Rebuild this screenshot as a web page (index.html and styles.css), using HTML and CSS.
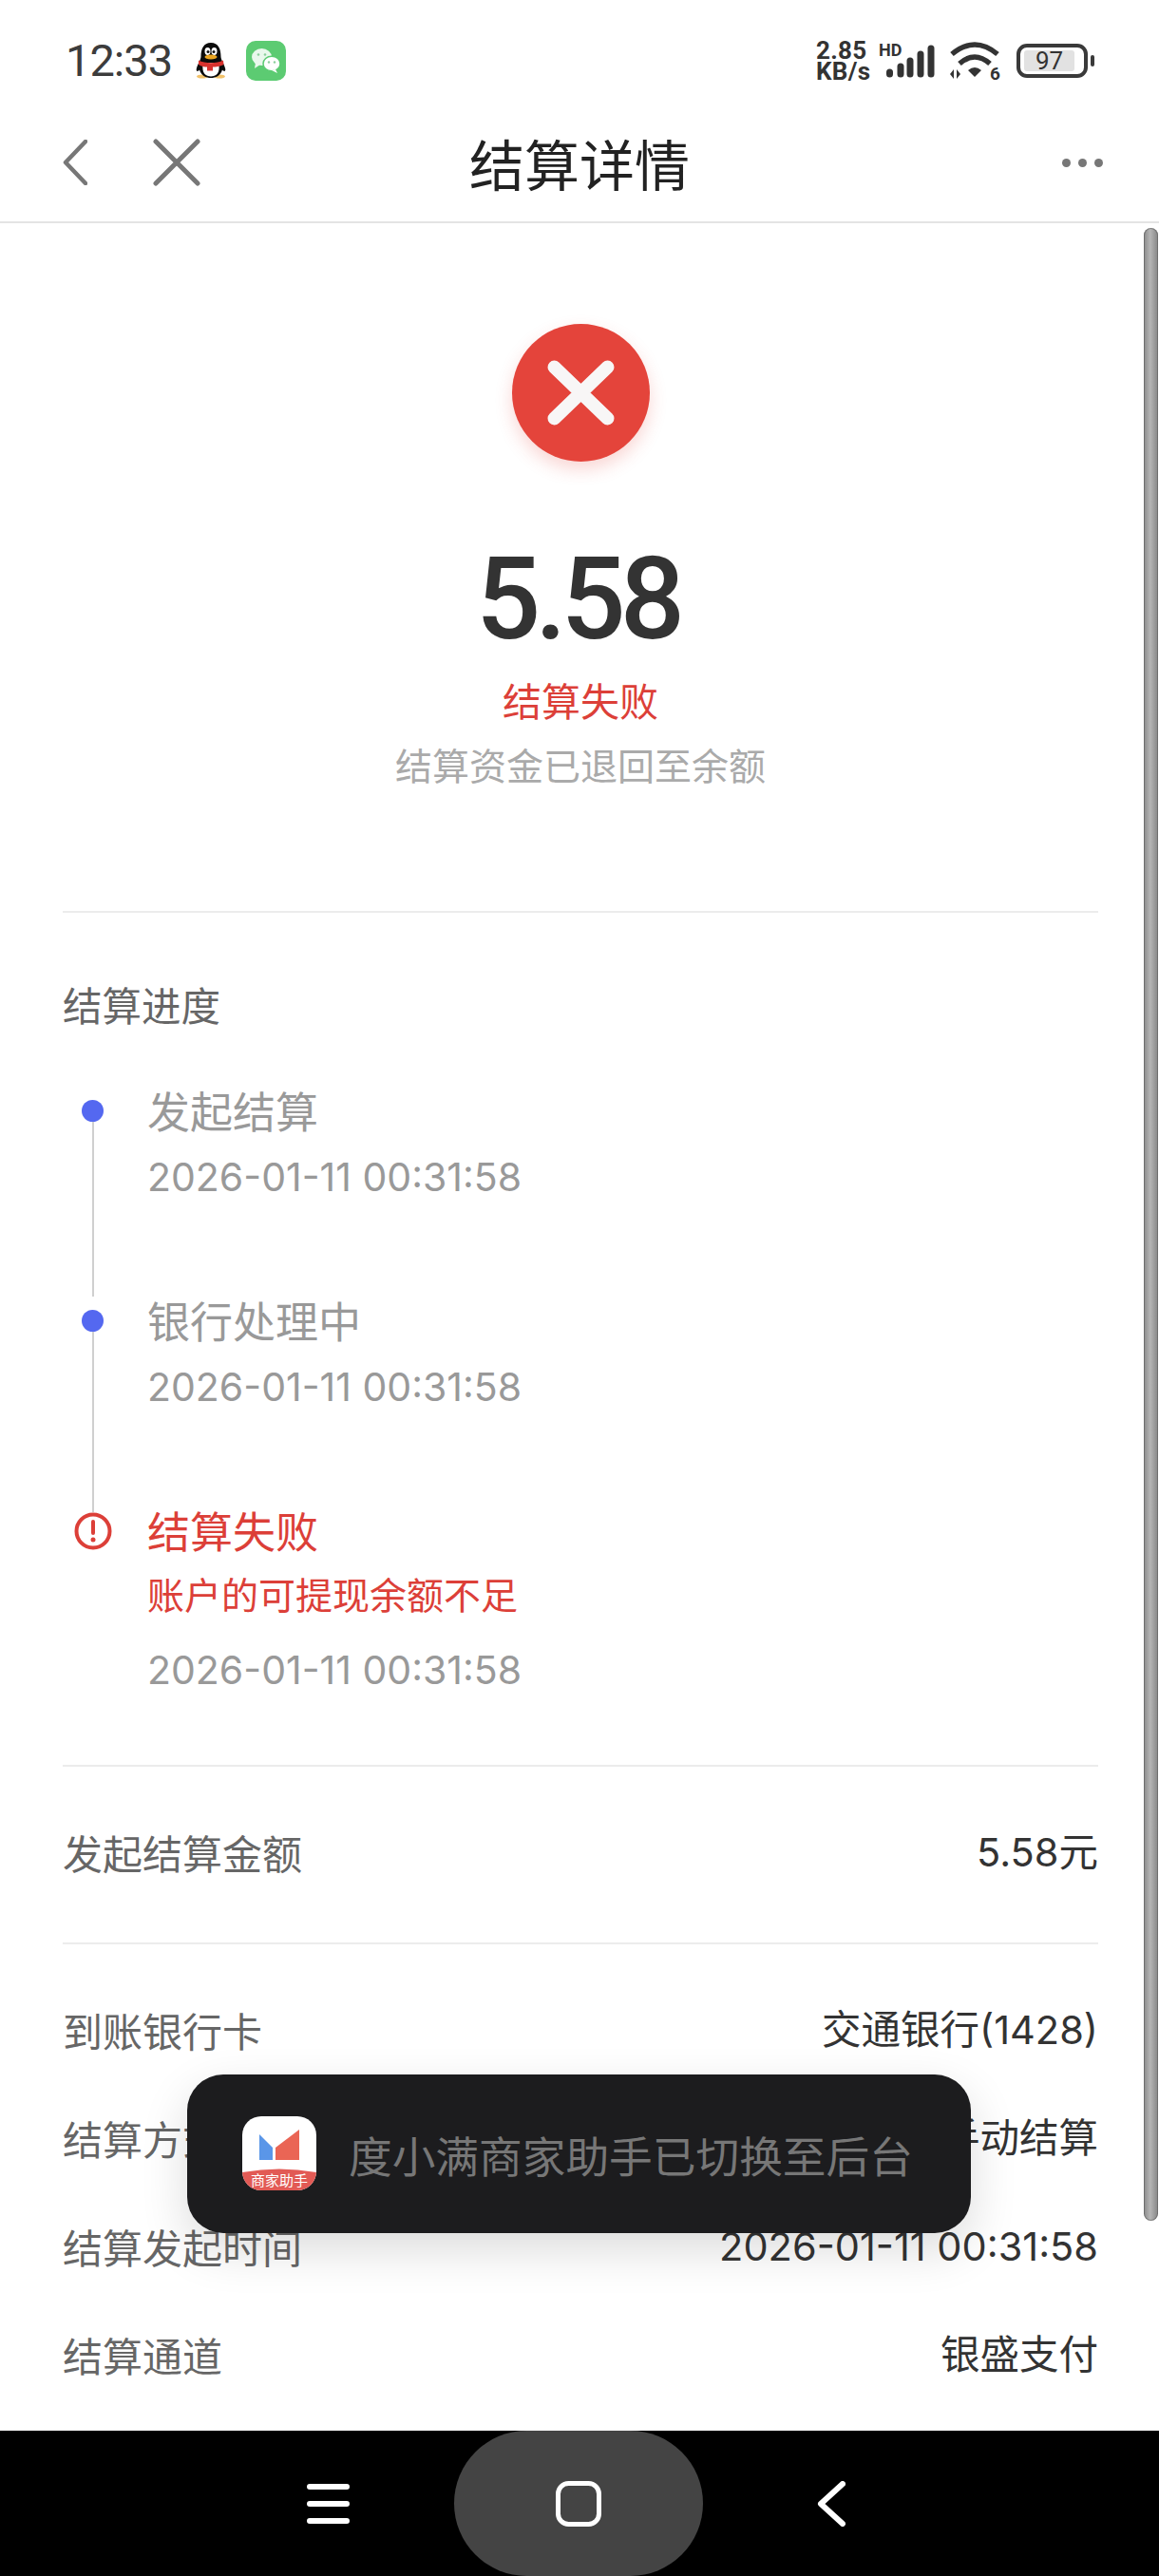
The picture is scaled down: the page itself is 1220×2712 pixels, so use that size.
FILE: index.html
```html
<!DOCTYPE html>
<html lang="zh-CN">
<head>
<meta charset="utf-8">
<title>结算详情</title>
<link rel="stylesheet" href="styles.css">
</head>
<body>
<div class="app">
  <header class="statusbar">
    <div class="status-left">
      <span class="clock">12:33</span>
      <svg class="qq" viewBox="0 0 32 38" width="32" height="38">
        <ellipse cx="7" cy="35.500" rx="6" ry="2" fill="#f2c26a"/><ellipse cx="25" cy="35.500" rx="6" ry="2" fill="#f2c26a"/>
        <path d="M16 0C8 0 5.500 7 5.500 14.500C5.500 18 2 22 .8 27.500C.3 30 2 31 4 28.500C6 35 11 37 16 37C21 37 26 35 28 28.500C30 31 31.700 30 31.200 27.500C30 22 26.500 18 26.500 14.500C26.500 7 24 0 16 0Z" fill="#0c0c0c"/>
        <path d="M8 21C6.500 27 7 35.500 16 35.500C25 35.500 25.500 27 24 21Z" fill="#fff"/>
        <ellipse cx="12.500" cy="9" rx="3" ry="4" fill="#fff"/><ellipse cx="19.500" cy="9" rx="3" ry="4" fill="#fff"/>
        <circle cx="13" cy="9.500" r="1.500" fill="#111"/><circle cx="19" cy="9.500" r="1.500" fill="#111"/>
        <ellipse cx="16" cy="15" rx="6.500" ry="2.500" fill="#eba622"/>
        <path d="M3 18.500C10 22 22 22 29 18.500L29.500 23C26 25 21 25.500 18 25.500L18 29.500L12 29.500L12 25.500C9 25.500 6 25 3 23Z" fill="#d8322e"/>
      </svg>
      <svg class="wechat" viewBox="0 0 42 42" width="42" height="42">
        <rect width="42" height="42" rx="10" fill="#5ccb72"/>
        <ellipse cx="16.500" cy="17" rx="10.500" ry="9" fill="#e9f8ec"/>
        <path d="M10 23L9 29L15 25Z" fill="#e9f8ec"/>
        <ellipse cx="27" cy="24" rx="9" ry="7.800" fill="#fff" stroke="#5ccb72" stroke-width="1.500"/>
        <path d="M31 30L33 34L27 31Z" fill="#fff"/>
        <circle cx="13" cy="14.500" r="1.300" fill="#8ccf9c"/><circle cx="20" cy="14.500" r="1.300" fill="#8ccf9c"/>
        <circle cx="24" cy="22.500" r="1.200" fill="#8ccf9c"/><circle cx="30" cy="22.500" r="1.200" fill="#8ccf9c"/>
      </svg>
    </div>
    <div class="status-right">
      <div class="speed"><span>2.85</span><span>KB/s</span></div>
      <div class="signal-wrap">
        <span class="hd">HD</span>
        <svg class="signal" viewBox="0 0 59 42" width="59" height="42">
          <g stroke="#333" stroke-width="7" stroke-linecap="round" fill="none">
            <path d="M11.500 33V35"/><path d="M23 27V35"/><path d="M33 21V35"/><path d="M44 14V35"/><path d="M55 8V35"/>
          </g>
        </svg>
      </div>
      <div class="wifi-wrap">
        <svg class="wifi" viewBox="0 0 54 42" width="54" height="42">
          <g stroke="#333" stroke-width="5.500" fill="none">
            <path d="M3 14Q27 -6 51 14"/>
            <path d="M11 24Q27 10 43 24"/>
          </g>
          <path d="M20 31Q27 25 34 31L27 38Z" fill="#333"/>
          <path d="M5 30V40L1 35ZM8 30V40L12 35Z" fill="#333"/>
        </svg>
        <span class="wifi-six">6</span>
      </div>
      <div class="battery">
        <div class="battery-body"><span class="battery-fill">97</span></div>
        <span class="battery-nub"></span>
      </div>
    </div>
  </header>

  <nav class="navbar">
    <div class="nav-left">
      <svg viewBox="0 0 26 48" width="26" height="48"><path d="M24 2L3 24L24 46" fill="none" stroke="#777" stroke-width="4.500" stroke-linecap="round" stroke-linejoin="round"/></svg>
      <svg viewBox="0 0 50 50" width="50" height="50"><path d="M3 3L47 47M47 3L3 47" fill="none" stroke="#777" stroke-width="5" stroke-linecap="round"/></svg>
    </div>
    <h1 class="nav-title">结算详情</h1>
    <div class="nav-more"><i></i><i></i><i></i></div>
  </nav>

  <main class="content">
    <section class="hero">
      <div class="fail-circle">
        <svg viewBox="0 0 145 145" width="145" height="145"><path d="M44.500 45.500L100.500 99.500M100.500 45.500L44.500 99.500" fill="none" stroke="#f8f6f6" stroke-width="14" stroke-linecap="round"/></svg>
      </div>
      <div class="amount">5.58</div>
      <div class="status-text">结算失败</div>
      <div class="status-sub">结算资金已退回至余额</div>
    </section>

    <section class="progress">
      <h2 class="progress-title">结算进度</h2>
      <div class="steps">
        <div class="step">
          <div class="marker"><span class="dot"></span><span class="line"></span></div>
          <div class="step-body step-body-gap">
            <div class="step-name">发起结算</div>
            <div class="step-time">2026-01-11 00:31:58</div>
          </div>
        </div>
        <div class="step">
          <div class="marker"><span class="dot"></span><span class="line"></span></div>
          <div class="step-body step-body-gap">
            <div class="step-name">银行处理中</div>
            <div class="step-time">2026-01-11 00:31:58</div>
          </div>
        </div>
        <div class="step">
          <div class="marker marker-error">
            <span class="line-stub"></span>
            <svg viewBox="0 0 40 40" width="40" height="40"><circle cx="20" cy="20" r="17.500" fill="none" stroke="#dc3f38" stroke-width="4"/><path d="M20 10V22" stroke="#dc3f38" stroke-width="4" stroke-linecap="round"/><circle cx="20" cy="29" r="2.500" fill="#dc3f38"/></svg>
          </div>
          <div class="step-body">
            <div class="step-name step-name-error">结算失败</div>
            <div class="step-error">账户的可提现余额不足</div>
            <div class="step-time step-time-after">2026-01-11 00:31:58</div>
          </div>
        </div>
      </div>
    </section>

    <section class="amount-row">
      <div class="row"><span class="row-label">发起结算金额</span><span class="row-value">5.58元</span></div>
    </section>

    <section class="details">
      <div class="row"><span class="row-label">到账银行卡</span><span class="row-value">交通银行(1428)</span></div>
      <div class="row"><span class="row-label">结算方式</span><span class="row-value">手动结算</span></div>
      <div class="row"><span class="row-label">结算发起时间</span><span class="row-value">2026-01-11 00:31:58</span></div>
      <div class="row"><span class="row-label">结算通道</span><span class="row-value">银盛支付</span></div>
    </section>

    <div class="scrollbar"></div>
    <div class="toast">
      <svg class="toast-icon" viewBox="0 0 78 78" width="78" height="78">
        <defs><clipPath id="iconclip"><rect width="78" height="78" rx="20"/></clipPath></defs>
        <g clip-path="url(#iconclip)">
          <rect width="78" height="78" fill="#fff"/>
          <path d="M18 19L32 33V46H18Z" fill="#5a96e8"/>
          <path d="M35 33L60 14V46H35Z" fill="#ea6555"/>
          <path d="M0 59Q39 52 78 59V78H0Z" fill="#e25a55"/>
          <text class="toast-icon-text" x="39" y="73" text-anchor="middle">商家助手</text>
        </g>
      </svg>
      <span class="toast-text">度小满商家助手已切换至后台</span>
    </div>
  </main>

  <footer class="sysnav">
    <svg viewBox="0 0 45 42" width="45" height="42"><path d="M3 3H42M3 21H42M3 39H42" stroke="#fff" stroke-width="6" stroke-linecap="round"/></svg>
    <div class="home-pill">
      <svg viewBox="0 0 48 48" width="48" height="48"><rect x="2.500" y="2.500" width="43" height="43" rx="11" fill="none" stroke="#fff" stroke-width="5"/></svg>
    </div>
    <svg viewBox="0 0 30 48" width="30" height="48"><path d="M27 3L4 24L27 45" fill="none" stroke="#fff" stroke-width="6" stroke-linecap="round" stroke-linejoin="round"/></svg>
  </footer>
</div>
</body>
</html>
```
FILE: styles.css
```css
* { box-sizing: border-box; }
html, body { margin: 0; padding: 0; background: #fff; }
body { font-family: "Noto Sans CJK SC", "Noto Sans", Roboto, sans-serif; color: #333; }
h1, h2 { margin: 0; font-weight: 400; }

.app { width: 1220px; height: 2712px; display: flex; flex-direction: column; overflow: hidden; background: #fff; }

/* status bar */
.statusbar { height: 124px; flex: none; display: flex; justify-content: space-between; align-items: flex-start; padding: 43px 68px 0 69px; }
.status-left { display: flex; align-items: center; height: 42px; }
.clock { font-family: Roboto, sans-serif; font-size: 47px; line-height: 42px; letter-spacing: -1px; color: #3c3c3c; width: 137px; }
.wechat { margin-left: 21px; }
.status-right { display: flex; align-items: center; height: 42px; }
.speed { display: flex; flex-direction: column; width: 58px; margin-right: 8px; font-family: Roboto, sans-serif; font-weight: 700; font-size: 26px; line-height: 22px; color: #333; letter-spacing: .3px; }
.signal-wrap { display: flex; width: 59px; height: 42px; margin-right: 15px; position: relative; }
.hd { position: absolute; left: 0; top: 0; font-family: Roboto, sans-serif; font-weight: 700; font-size: 18px; line-height: 20px; color: #333; }
.wifi-wrap { display: flex; width: 54px; height: 42px; margin-right: 17px; position: relative; }
.wifi-six { position: absolute; right: 0; bottom: 0; font-family: Roboto, sans-serif; font-weight: 700; font-size: 19px; line-height: 15px; color: #333; }
.battery { display: flex; align-items: center; gap: 3px; }
.battery-body { width: 75px; height: 36px; border: 4px solid #3a3a3a; border-radius: 11px; padding: 3px 10px 3px 4px; display: flex; }
.battery-fill { flex: 1; background: #e2e2e2; border-radius: 3px; font-family: Roboto, sans-serif; font-size: 26px; line-height: 22px; text-align: center; color: #333; }
.battery-nub { width: 4px; height: 12px; background: #3a3a3a; border-radius: 2px; }

/* nav */
.navbar { height: 111px; flex: none; display: grid; grid-template-columns: 1fr auto 1fr; align-items: center; padding: 0 59px 15px; border-bottom: 2px solid #e4e4e4; }
.nav-left { display: flex; align-items: center; gap: 69px; padding-left: 7px; }
.nav-title { font-size: 58px; line-height: 80px; color: #222; }
.nav-more { display: flex; justify-content: flex-end; gap: 8px; }
.nav-more i { width: 9px; height: 9px; border-radius: 50%; background: #777; }

/* content */
.content { flex: 1; position: relative; padding: 0 64px 0 66px; min-height: 0; }
.hero { display: flex; flex-direction: column; align-items: center; padding: 106px 0 130px; border-bottom: 2px solid #ececec; }
.fail-circle { width: 145px; height: 145px; border-radius: 50%; background: #e4443b; box-shadow: 0 8px 18px rgba(229, 69, 59, .22); }
.fail-circle svg { display: block; }
.amount { margin-top: 85px; font-family: Roboto, sans-serif; font-weight: 500; font-size: 120px; line-height: 120px; letter-spacing: -6px; margin-left: -6px; color: #333; }
.status-text { margin-top: 20px; font-size: 41px; line-height: 50px; color: #dc3f38; }
.status-sub { margin-top: 18px; font-size: 39px; line-height: 50px; color: #aaa; }

.progress { padding: 71px 0 75px; border-bottom: 2px solid #ececec; }
.progress-title { font-size: 41.500px; line-height: 50px; color: #666; }
.steps { margin-top: 62px; display: flex; flex-direction: column; }
.step { display: flex; }
.step-body-gap { padding-bottom: 101px; }
.marker { width: 63px; margin-right: 26px; display: flex; flex-direction: column; align-items: center; padding-top: 14px; flex: none; }
.dot { width: 23px; height: 23px; border-radius: 50%; background: #5468f0; flex: none; }
.line { width: 2px; flex: 1; background: #cfcfcf; }
.marker-error { padding-top: 0; }
.line-stub { width: 2px; height: 6px; background: #cfcfcf; flex: none; }
.marker-error svg { display: block; }
.step-name { font-size: 45px; line-height: 50px; color: #999; }
.step-name-error { color: #dc3f38; }
.step-time { margin-top: 20px; font-family: Inter, "Noto Sans CJK SC", sans-serif; font-size: 41px; line-height: 50px; color: #999; }
.step-error { margin-top: 16px; font-size: 39px; line-height: 50px; color: #dc3f38; }
.step-time-after { margin-top: 31px; }

.amount-row { padding: 65px 0 70px; border-bottom: 2px solid #ececec; }
.details { padding-top: 65px; display: flex; flex-direction: column; gap: 64px; }
.row { display: flex; justify-content: space-between; align-items: center; line-height: 50px; font-size: 42px; }
.row-label { color: #666; }
.row-value { color: #333; font-family: Inter, "Noto Sans CJK SC", sans-serif; font-size: 41.500px; }

/* overlays */
.scrollbar { position: absolute; top: 5px; right: 1px; width: 15px; height: 2098px; border-radius: 8px; background: linear-gradient(90deg, #8a8a8a, #b5b5b5 45%, #8e8e8e 90%); box-shadow: inset 0 0 0 1px rgba(70, 70, 70, .45); }
.toast { position: absolute; left: 197px; top: 1949px; width: 825px; height: 167px; border-radius: 38px; background: #1c1c1e; display: flex; align-items: center; padding-left: 58px; gap: 34px; box-shadow: 0 18px 50px rgba(0, 0, 0, .14); }
.toast-icon { flex: none; margin-top: -1px; }
.toast-icon-text { font-size: 15px; fill: #fff; }
.toast-text { font-size: 45.700px; line-height: 60px; color: #777; white-space: nowrap; }

/* system nav */
.sysnav { height: 153px; flex: none; background: #000; display: flex; align-items: center; padding-left: 323px; }
.sysnav > svg:first-child { margin-right: 110px; }
.home-pill { width: 262px; height: 153px; border-radius: 95px; background: #444; display: flex; align-items: center; justify-content: center; margin-right: 120px; }
```
